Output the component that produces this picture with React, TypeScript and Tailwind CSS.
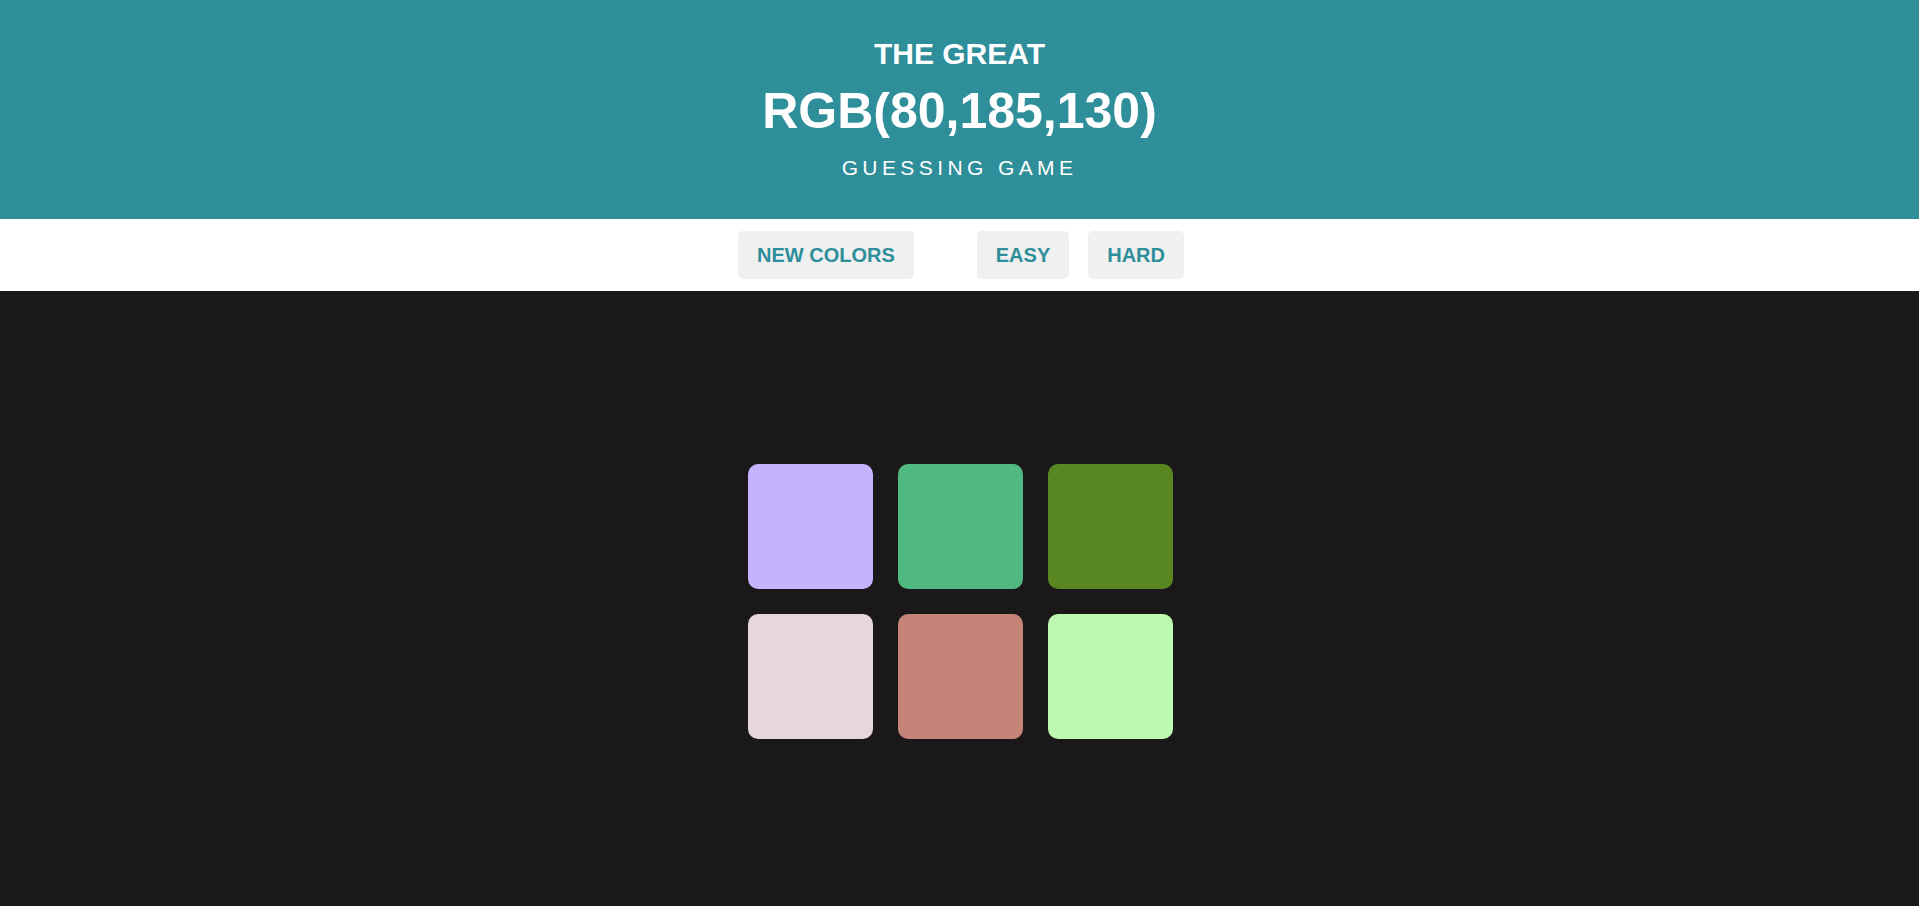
const SQUARES = [
  "rgb(196,180,255)",
  "rgb(80,185,130)",
  "rgb(88,135,34)",
  "rgb(232,214,221)",
  "rgb(196,132,120)",
  "rgb(189,249,174)",
];

export default function App() {
  return (
    <div className="flex min-h-screen flex-col bg-[#1a1819] font-['Liberation_Sans',Arial,sans-serif]">
      {/* Titulo */}
      <header className="flex h-[219px] flex-col items-center bg-[#2e8e9a] pt-[34px] text-center font-bold text-white">
        <span className="block text-[30px] leading-[40px]">THE GREAT</span>
        <span className="block text-[50px] leading-[74px]">RGB(80,185,130)</span>
        <span className="block text-[21px] font-normal leading-[39px] tracking-[4.4px]">
          GUESSING GAME
        </span>
      </header>

      {/* Barra */}
      <nav className="flex h-[72px] items-center justify-center bg-white pl-[3px]">
        <button className="h-12 rounded-[5px] bg-[#f0f0f0] px-[19px] text-[20px] font-bold text-[#2e8e9a]">
          NEW COLORS
        </button>
        <button className="ml-[63px] h-12 rounded-[5px] bg-[#f0f0f0] px-[19px] text-[20px] font-bold text-[#2e8e9a]">
          EASY
        </button>
        <button className="ml-[19px] h-12 rounded-[5px] bg-[#f0f0f0] px-[19px] text-[20px] font-bold text-[#2e8e9a]">
          HARD
        </button>
      </nav>

      {/* Quadrados */}
      <main className="flex flex-1 justify-center pl-[2px] pt-[173px]">
        <div className="grid h-fit grid-cols-[repeat(3,125px)] gap-[25px]">
          {SQUARES.map((c, i) => (
            <div
              key={i}
              className="h-[125px] w-[125px] rounded-[10px]"
              style={{ backgroundColor: c }}
            />
          ))}
        </div>
      </main>
    </div>
  );
}
